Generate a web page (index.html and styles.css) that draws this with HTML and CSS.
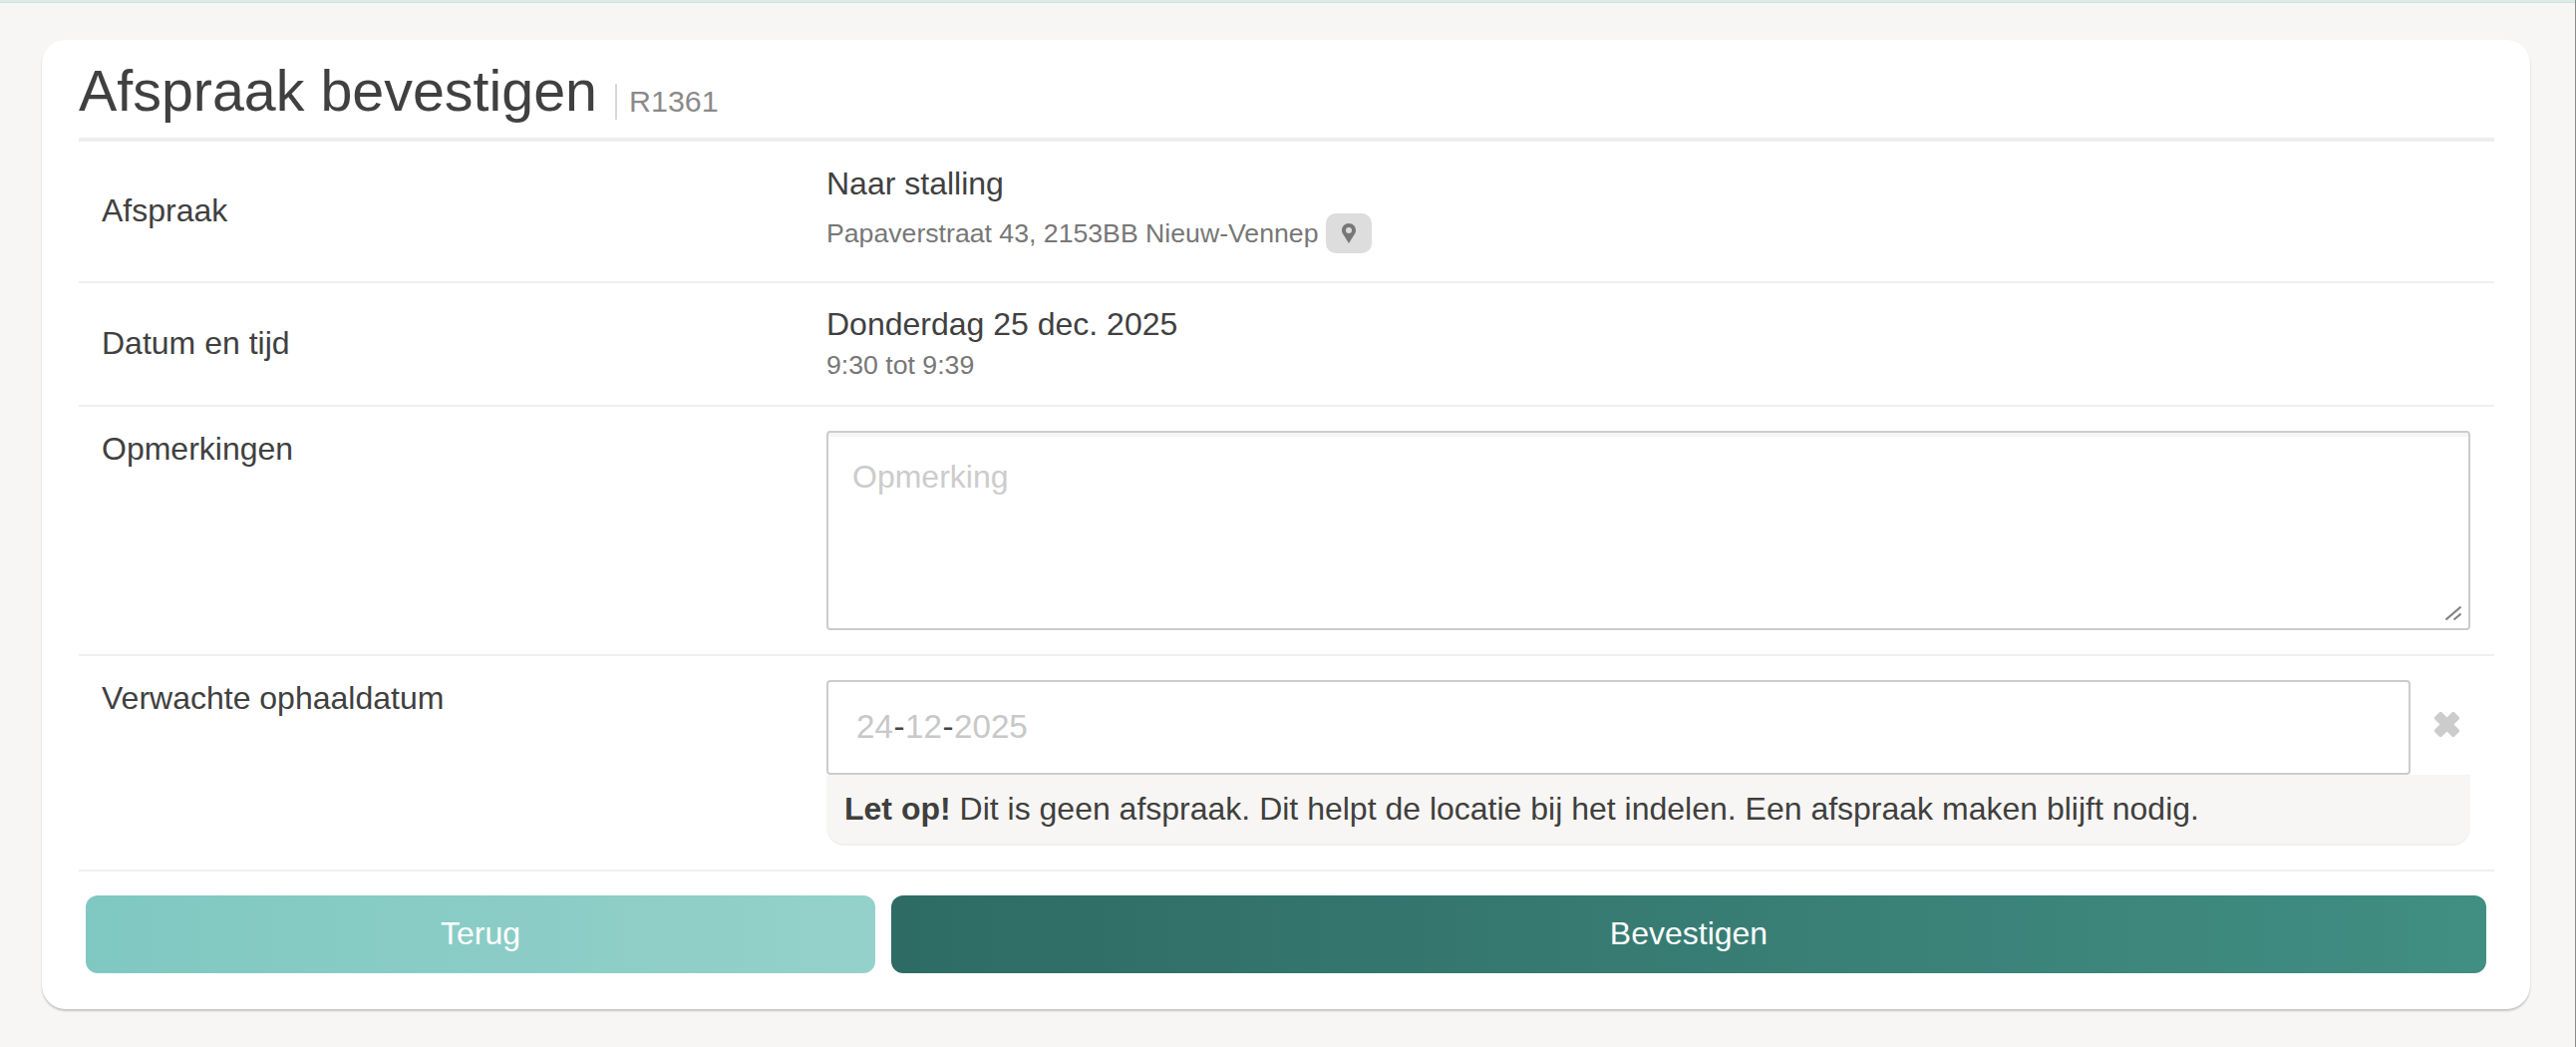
FILE: index.html
```html
<!DOCTYPE html>
<html lang="nl">
<head>
<meta charset="utf-8">
<title>Afspraak bevestigen</title>
<link rel="stylesheet" href="styles.css">
</head>
<body>
<div class="topbar"></div>
<main class="card">
  <header class="head">
    <h1 class="title">Afspraak bevestigen</h1>
    <span class="ref">R1361</span>
  </header>
  <section class="row row-appt">
    <div class="label label-mid">Afspraak</div>
    <div class="value">
      <div class="main-line">Naar stalling</div>
      <div class="sub-line sub-address">Papaverstraat 43, 2153BB Nieuw-Vennep
        <span class="pin-badge">
          <svg class="pin" viewBox="0 0 14 20" aria-hidden="true"><path fill-rule="evenodd" d="M7 0C3.1 0 0 3.1 0 7c0 1.6.5 2.6 1.200 3.800L7 20l5.800-9.200C13.500 9.600 14 8.600 14 7c0-3.900-3.100-7-7-7zm0 10a3 3 0 1 1 0-6 3 3 0 0 1 0 6z"/></svg>
        </span>
      </div>
    </div>
  </section>
  <section class="row row-date">
    <div class="label label-mid">Datum en tijd</div>
    <div class="value">
      <div class="main-line">Donderdag 25 dec. 2025</div>
      <div class="sub-line">9:30 tot 9:39</div>
    </div>
  </section>
  <section class="row row-form">
    <div class="label">Opmerkingen</div>
    <div class="value area-wrap">
      <textarea class="area" placeholder="Opmerking"></textarea>
      <svg class="grip" viewBox="0 0 16 14" aria-hidden="true"><path d="M0.500 13.500 15.500 0.500M8.500 13.500 15.500 7.500"/></svg>
    </div>
  </section>
  <section class="row row-form">
    <div class="label">Verwachte ophaaldatum</div>
    <div class="value">
      <div class="date-line">
        <div class="date-input"><span>24</span><span class="dash">-</span><span>12</span><span class="dash">-</span><span>2025</span></div>
        <svg class="clear" viewBox="0 0 27 27" aria-hidden="true"><rect x="-0.500" y="8.500" width="28" height="10" rx="2" transform="rotate(45 13.500 13.500)"/><rect x="-0.500" y="8.500" width="28" height="10" rx="2" transform="rotate(-45 13.500 13.500)"/></svg>
      </div>
      <div class="note"><p class="note-text"><strong>Let op!</strong> Dit is geen afspraak. Dit helpt de locatie bij het indelen. Een afspraak maken blijft nodig.</p></div>
    </div>
  </section>
  <div class="actions">
    <button class="btn btn-back" type="button">Terug</button>
    <button class="btn btn-confirm" type="button">Bevestigen</button>
  </div>
</main>
<div class="edge"></div>
</body>
</html>
```
FILE: styles.css
```css
* { box-sizing: border-box; }
html, body { height: 100%; }
body {
  margin: 0;
  background: #f7f6f4;
  font-family: "Liberation Sans", Arial, sans-serif;
  font-size: 32px;
  color: #404040;
  overflow: hidden;
}
.topbar { height: 3px; background: #dcebe7; border-bottom: 1px solid #cfe2dd; }
.edge {
  position: fixed;
  top: 0;
  right: 0;
  bottom: 0;
  width: 1px;
  background: #8a8a8a;
}
.card {
  margin: 37px 46px 0 42px;
  height: 972px;
  padding: 0 36px 0 37px;
  background: #fff;
  border-radius: 24px;
  box-shadow: 0 2px 2px rgba(0, 0, 0, 0.2);
}
.head {
  height: 102px;
  display: flex;
  align-items: flex-start;
  border-bottom: 4px solid #eeeeee;
}
.title {
  margin: 18px 0 0;
  font-size: 57.4px;
  line-height: 66px;
  font-weight: 400;
  color: #404040;
}
.ref {
  margin: 44px 0 0 18px;
  padding-left: 12px;
  height: 36px;
  border-left: 2px solid #d8d8d8;
  font-size: 30.4px;
  line-height: 34px;
  color: #8a8a8a;
}
.row {
  display: grid;
  grid-template-columns: 727px 1fr;
  padding: 0 24px 0 23px;
  border-bottom: 2px solid #f0f0f0;
}
.row-appt { height: 142px; }
.row-date { height: 124px; }
.row-form { padding-top: 24px; padding-bottom: 24px; }
.label { line-height: 36px; }
.label-mid { align-self: center; margin-top: -2px; }
.main-line { line-height: 36px; }
.row-appt .main-line { margin-top: 24px; }
.row-date .main-line { margin-top: 23px; }
.sub-line { font-size: 26.67px; line-height: 36px; color: #777; }
.row-date .sub-line { margin-top: 5px; }
.sub-address { display: flex; align-items: center; gap: 8px; margin-top: 12px; height: 40px; }
.pin-badge {
  display: inline-flex;
  align-items: center;
  justify-content: center;
  width: 46px;
  height: 40px;
  border-radius: 10px;
  background: #dddddd;
}
.pin { width: 14px; height: 20px; fill: #777; }
.area-wrap { position: relative; }
.area {
  display: block;
  width: 100%;
  height: 200px;
  padding: 26px 24px;
  border: 2px solid #cccccc;
  border-radius: 4px;
  box-shadow: inset 0 4px 0 rgba(0, 0, 0, 0.04);
  font: 32px/36px "Liberation Sans", Arial, sans-serif;
  color: #404040;
  background: #fff;
  outline: none;
  resize: none;
}
.area::placeholder { color: #cccccc; opacity: 1; }
.grip {
  position: absolute;
  right: 9px;
  bottom: 10px;
  width: 16px;
  height: 14px;
  fill: none;
  stroke: #808080;
  stroke-width: 2;
}
.date-line { display: flex; align-items: center; }
.date-input {
  width: 1589px;
  height: 95px;
  padding: 0 28px 2px;
  display: flex;
  align-items: center;
  gap: 0.5px;
  border: 2px solid #cccccc;
  border-radius: 4px;
  font-size: 33.2px;
  color: #c8c8c8;
  background: #fff;
}
.dash { color: #444; }
.clear { width: 27px; height: 27px; margin: -6px 0 0 23px; fill: #cccccc; }
.note {
  height: 71px;
  padding: 0 18px 2px;
  display: flex;
  align-items: center;
  background: #f7f6f4;
  border-bottom: 2px solid #efefef;
  border-radius: 0 0 18px 18px;
  color: #403f3d;
}
.note-text { margin: 0; font-size: 32px; line-height: 36px; }
.note strong { font-weight: 700; }
.actions {
  display: grid;
  grid-template-columns: 792px 1fr;
  gap: 16px;
  padding: 24px 8px 0 7px;
}
.btn {
  height: 78px;
  padding: 0 0 2px;
  border: 0;
  border-radius: 12px;
  font: 32px "Liberation Sans", Arial, sans-serif;
  color: #fff;
}
.btn-back { background: linear-gradient(90deg, #7fc8c1, #94d1ca); }
.btn-confirm { background: linear-gradient(90deg, #2e6b65, #418e83); }
```
